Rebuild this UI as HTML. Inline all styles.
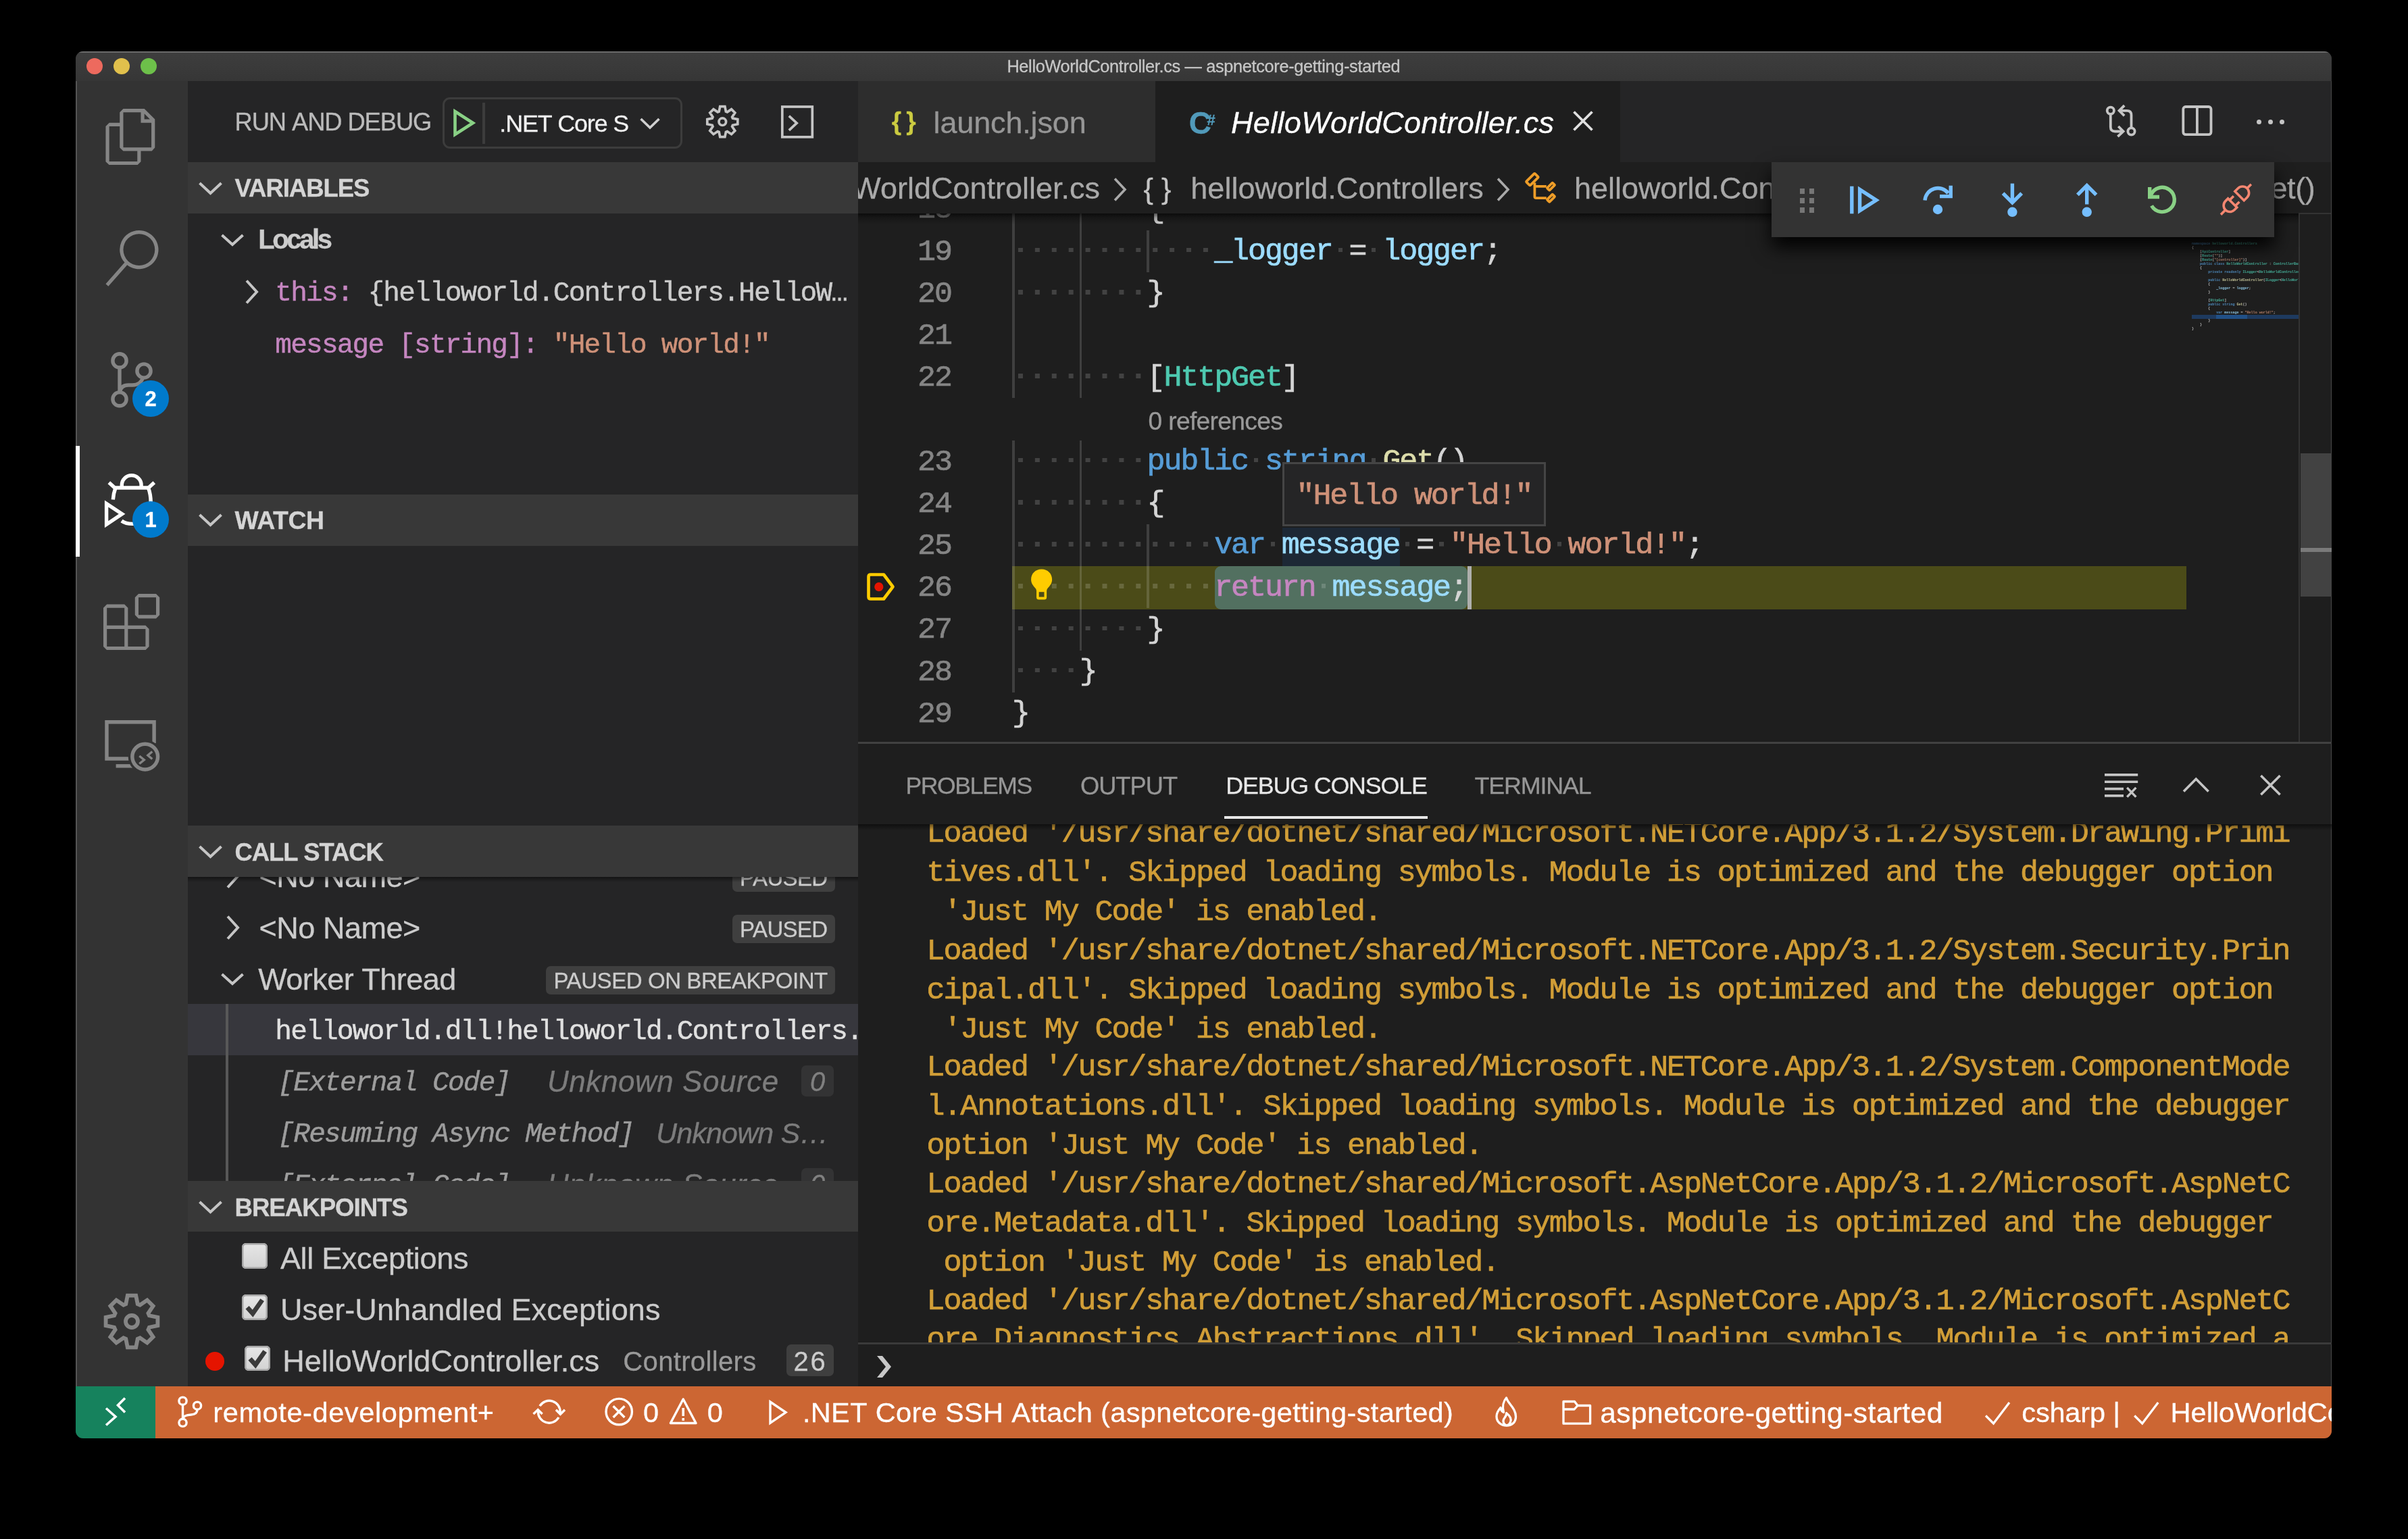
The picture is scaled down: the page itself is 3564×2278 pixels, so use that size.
<!DOCTYPE html>
<html><head><meta charset="utf-8"><title>VS Code</title>
<style>
html,body{margin:0;padding:0;background:#000;}
body{width:3564px;height:2278px;overflow:hidden;position:relative;}
#win{position:absolute;left:112px;top:76px;width:3339px;height:2053px;overflow:hidden;border-radius:11px;background:#1e1e1e;}
#in{position:absolute;left:-112px;top:-76px;width:3564px;height:2278px;will-change:transform;-webkit-font-smoothing:antialiased;}
#in div,#in svg{position:absolute;}
.t{white-space:pre;-webkit-text-stroke:0.3px;}
.clip{overflow:hidden;}
.clip div,.clip svg{position:absolute;}
</style></head><body>
<div id="win"><div id="in">
<div style="left:112.0px;top:76.0px;width:3339.0px;height:44.0px;background:linear-gradient(#3e3e3e,#363636);"></div>
<div style="left:112.0px;top:76.0px;width:3339.0px;height:2.0px;background:#6a6a6a;"></div>
<div style="left:112.0px;top:120.0px;width:166.0px;height:1932.0px;background:#333333;"></div>
<div style="left:278.0px;top:120.0px;width:992.0px;height:1932.0px;background:#252526;"></div>
<div style="left:1270.0px;top:120.0px;width:2181.0px;height:120.0px;background:#252526;"></div>
<div style="left:1270.0px;top:120.0px;width:440.0px;height:120.0px;background:#2d2d2d;"></div>
<div style="left:1710.0px;top:120.0px;width:688.0px;height:120.0px;background:#1e1e1e;"></div>
<div style="left:1270.0px;top:240.0px;width:2181.0px;height:1812.0px;background:#1e1e1e;"></div>
<div style="left:127.8px;top:85.8px;width:24.4px;height:24.4px;background:#ed6a5e;border-radius:50%;"></div>
<div style="left:167.8px;top:85.8px;width:24.4px;height:24.4px;background:#e1c04c;border-radius:50%;"></div>
<div style="left:207.8px;top:85.8px;width:24.4px;height:24.4px;background:#6dc04a;border-radius:50%;"></div>
<div class="t" style="left:1490.40px;top:81.29px;font:400 25.29px/35px 'Liberation Sans',sans-serif;color:#c6c6c6;letter-spacing:-0.314px;">HelloWorldController.cs&nbsp;—&nbsp;aspnetcore-getting-started</div>
<svg style="left:153.4px;top:160.7px;" width="83.2" height="83.2" viewBox="0 0 24 24"><path fill="#858585"  d="M17.5 0h-9L7 1.5V6H2.5L1 7.5v15.07L2.5 24h12.07L16 22.57V18h4.7l1.3-1.43V4.5L17.5 0zm0 2.12l2.38 2.38H17.5V2.12zm-3 20.38h-12v-15H7v9.07L8.5 18h6v4.5zm6-6h-12v-15H16V6h4.5v10.5z"/></svg>
<svg style="left:153.4px;top:340.5px;" width="83.2" height="83.2" viewBox="0 0 24 24"><path fill="#858585"  d="M15.25 0a8.25 8.25 0 0 0-6.18 13.72L1 22.88l1.12 1 8.05-9.12A8.251 8.251 0 1 0 15.25.01V0zm0 15a6.75 6.75 0 1 1 0-13.5 6.75 6.75 0 0 1 0 13.5z"/></svg>
<svg style="left:150.0px;top:515.0px;" width="90.0" height="95.0" viewBox="150 515 90 95"><g fill="none" stroke="#858585" stroke-width="5.4"><circle cx="177" cy="533.9" r="10.1"/><circle cx="177" cy="590.7" r="10.1"/><circle cx="213" cy="549" r="10.1"/><path d="M177 544 V580.6"/><path d="M211.5 559 Q208 570 196 570 H190 Q179 570 177.5 580"/></g></svg>
<svg style="left:153.4px;top:878.7px;" width="83.2" height="83.2" viewBox="0 0 24 24"><path fill="#858585" fill-rule="evenodd" clip-rule="evenodd" d="M13.5 1.5L15 0h7.5L24 1.5V9l-1.5 1.5H15L13.5 9V1.5zm1.5 0V9h7.5V1.5H15zM0 15V6l1.5-1.5H9L10.5 6v7.5H18l1.5 1.5v7.5L18 24H1.5L0 22.5V15zm9-1.5V6H1.5v7.5H9zM9 15H1.5v7.5H9V15zm1.5 7.5H18V15h-7.5v7.5z"/></svg>
<svg style="left:150.0px;top:1060.0px;" width="95.0" height="90.0" viewBox="150 1060 95 90"><g fill="none" stroke="#858585" stroke-width="5.4"><path d="M228.1 1100 V1068.8 H158 V1123 H192"/><path d="M171.6 1133.8 H196"/><circle cx="214.7" cy="1120.1" r="25" fill="#333333" stroke="none"/><circle cx="214.7" cy="1120.1" r="18.9"/><path d="M206.3 1119 L213.3 1124.7 L206.3 1130.5" stroke-width="3.4"/><path d="M225.3 1112.5 L218.8 1118 L225.3 1123.5" stroke-width="3.4"/></g></svg>
<svg style="left:148.0px;top:692.0px;" width="95.0" height="100.0" viewBox="148 692 95 100"><g fill="none" stroke="#ffffff" stroke-width="5.4"><path d="M180.3 722 V718 A14.4 14.4 0 0 1 209.1 718 V722"/><path d="M171 722 H219.5"/><path d="M161.3 714.3 L171.5 723.6 M228.3 714.3 L218.1 723.6"/><path d="M219.5 722 Q223.2 732 223.2 744 V754 Q223.2 775.4 196 775.4 Q186 775.4 180 771"/><path d="M171 722 Q168 730 167.3 739.5"/><path d="M157.6 745.5 L180.6 760.8 L157.6 776.2 Z" stroke-linejoin="miter"/></g></svg>
<div style="left:196.0px;top:562.9px;width:54.2px;height:54.2px;background:#007acc;border-radius:50%;"></div>
<div class="t" style="left:214.47px;top:569.16px;font:700 31.00px/43px 'Liberation Sans',sans-serif;color:#ffffff;">2</div>
<div style="left:196.0px;top:742.2px;width:54.2px;height:54.2px;background:#007acc;border-radius:50%;"></div>
<div class="t" style="left:214.47px;top:748.46px;font:700 31.00px/43px 'Liberation Sans',sans-serif;color:#ffffff;">1</div>
<svg style="left:144.9px;top:1906.4px;" width="100.0" height="100.0" viewBox="144.9 1906.4 100.0 100.0"><g fill="none" stroke="#858585" stroke-width="5.8"><path d="M186.2 1930.5 L188.7 1918.0 L201.1 1918.0 L203.6 1930.5 L207.1 1932.0 L217.7 1924.8 L226.5 1933.6 L219.3 1944.2 L220.8 1947.7 L233.3 1950.2 L233.3 1962.6 L220.8 1965.1 L219.3 1968.6 L226.5 1979.2 L217.7 1988.0 L207.1 1980.8 L203.6 1982.3 L201.1 1994.8 L188.7 1994.8 L186.2 1982.3 L182.7 1980.8 L172.1 1988.0 L163.3 1979.2 L170.5 1968.6 L169.0 1965.1 L156.5 1962.6 L156.5 1950.2 L169.0 1947.7 L170.5 1944.2 L163.3 1933.6 L172.1 1924.8 L182.7 1932.0 Z" stroke-linejoin="miter"/><circle cx="194.9" cy="1956.4" r="9.0"/></g></svg>
<div style="left:112.0px;top:120.0px;width:2.2px;height:1932.0px;background:#555555;"></div>
<div style="left:112.0px;top:659.6px;width:5.5px;height:164.4px;background:#ffffff;"></div>
<div class="t" style="left:347.50px;top:155.42px;font:400 36.35px/51px 'Liberation Sans',sans-serif;color:#bbbbbb;letter-spacing:-1.079px;">RUN&nbsp;AND&nbsp;DEBUG</div>
<div style="left:654.6px;top:144.0px;width:355.4px;height:76.0px;background:#252526;box-sizing:border-box;border:3.5px solid #3c3c3c;border-radius:11px;"></div>
<svg style="left:669.0px;top:160.0px;" width="36.0" height="44.0" viewBox="0 0 36 44"><path d="M4.5 5 L31 22 L4.5 39 Z" fill="none" stroke="#89d185" stroke-width="4.6" stroke-linejoin="miter"/></svg>
<div style="left:713.5px;top:152.0px;width:4.0px;height:61.0px;background:#3c3c3c;"></div>
<div class="t" style="left:739.30px;top:157.81px;font:400 35.87px/50px 'Liberation Sans',sans-serif;color:#f0f0f0;letter-spacing:-1.130px;">.NET&nbsp;Core&nbsp;S</div>
<svg style="left:946.5px;top:171.5px;" width="30.0" height="22.0" viewBox="0 0 30 22"><polyline points="1.5,4 15.0,17 28.5,4" fill="none" stroke="#d0d0d0" stroke-width="3.6" stroke-linejoin="miter"/></svg>
<div style="left:278.0px;top:240.0px;width:992.0px;height:76.3px;background:#383838;"></div>
<svg style="left:293.5px;top:266.5px;" width="35.0" height="24.0" viewBox="0 0 35 24"><polyline points="1.5,4 17.5,19 33.5,4" fill="none" stroke="#c5c5c5" stroke-width="4" stroke-linejoin="miter"/></svg>
<div class="t" style="left:347.50px;top:253.22px;font:700 36.52px/51px 'Liberation Sans',sans-serif;color:#d4d4d4;letter-spacing:-1.044px;">VARIABLES</div>
<svg style="left:326.5px;top:344.0px;" width="34.0" height="23.0" viewBox="0 0 34 23"><polyline points="1.5,4 17.0,18 32.5,4" fill="none" stroke="#c5c5c5" stroke-width="4" stroke-linejoin="miter"/></svg>
<div class="t" style="left:382.20px;top:326.26px;font:700 39.90px/56px 'Liberation Sans',sans-serif;color:#cccccc;letter-spacing:-3.310px;">Locals</div>
<svg style="left:360.5px;top:414.0px;" width="24.0" height="36.0" viewBox="0 0 24 36"><polyline points="4,1.5 19,18.0 4,34.5" fill="none" stroke="#c5c5c5" stroke-width="4" stroke-linejoin="miter"/></svg>
<div class="t" style="left:407.30px;top:406.08px;font:400 41.00px/57px 'Liberation Mono',monospace;color:#c586c0;letter-spacing:-1.744px;-webkit-text-stroke:0.45px;">this:</div>
<div class="t" style="left:544.46px;top:406.08px;font:400 41.00px/57px 'Liberation Mono',monospace;color:#cccccc;letter-spacing:-1.744px;-webkit-text-stroke:0.45px;">{helloworld.Controllers.HelloW…</div>
<div class="t" style="left:407.30px;top:483.08px;font:400 41.00px/57px 'Liberation Mono',monospace;color:#c586c0;letter-spacing:-1.744px;-webkit-text-stroke:0.45px;">message&nbsp;[string]:</div>
<div class="t" style="left:818.78px;top:483.08px;font:400 41.00px/57px 'Liberation Mono',monospace;color:#ce9178;letter-spacing:-1.744px;-webkit-text-stroke:0.45px;">"Hello&nbsp;world!"</div>
<div style="left:278.0px;top:731.6px;width:992.0px;height:76.4px;background:#383838;"></div>
<svg style="left:293.5px;top:758.0px;" width="35.0" height="24.0" viewBox="0 0 35 24"><polyline points="1.5,4 17.5,19 33.5,4" fill="none" stroke="#c5c5c5" stroke-width="4" stroke-linejoin="miter"/></svg>
<div class="t" style="left:347.50px;top:744.43px;font:700 37.37px/52px 'Liberation Sans',sans-serif;color:#d4d4d4;letter-spacing:-0.438px;">WATCH</div>
<div class="clip" style="left:278.0px;top:1298.0px;width:992.0px;height:450.0px;"><div style="left:-278.0px;top:-1298.0px;width:3564px;height:2278px;">
<svg style="left:333.0px;top:1278.7px;" width="24.0" height="36.0" viewBox="0 0 24 36"><polyline points="4,1.5 19,18.0 4,34.5" fill="none" stroke="#c5c5c5" stroke-width="4" stroke-linejoin="miter"/></svg>
<div class="t" style="left:383.50px;top:1265.72px;font:400 45.00px/63px 'Liberation Sans',sans-serif;color:#cccccc;letter-spacing:-0.481px;">&lt;No&nbsp;Name&gt;</div>
<div style="left:1084.1px;top:1278.0px;width:151.7px;height:41.5px;background:#3f3f3f;border-radius:7px;"></div>
<div class="t" style="left:1095.10px;top:1276.63px;font:400 33.00px/46px 'Liberation Sans',sans-serif;color:#cccccc;letter-spacing:-0.630px;">PAUSED</div>
<svg style="left:333.0px;top:1354.7px;" width="24.0" height="36.0" viewBox="0 0 24 36"><polyline points="4,1.5 19,18.0 4,34.5" fill="none" stroke="#c5c5c5" stroke-width="4" stroke-linejoin="miter"/></svg>
<div class="t" style="left:383.50px;top:1341.72px;font:400 45.00px/63px 'Liberation Sans',sans-serif;color:#cccccc;letter-spacing:-0.481px;">&lt;No&nbsp;Name&gt;</div>
<div style="left:1084.1px;top:1354.0px;width:151.7px;height:41.5px;background:#3f3f3f;border-radius:7px;"></div>
<div class="t" style="left:1095.10px;top:1352.63px;font:400 33.00px/46px 'Liberation Sans',sans-serif;color:#cccccc;letter-spacing:-0.630px;">PAUSED</div>
<svg style="left:326.5px;top:1438.0px;" width="34.0" height="23.0" viewBox="0 0 34 23"><polyline points="1.5,4 17.0,18 32.5,4" fill="none" stroke="#c5c5c5" stroke-width="4" stroke-linejoin="miter"/></svg>
<div class="t" style="left:382.20px;top:1417.92px;font:400 45.00px/63px 'Liberation Sans',sans-serif;color:#cccccc;letter-spacing:-0.517px;">Worker&nbsp;Thread</div>
<div style="left:807.9px;top:1430.3px;width:427.9px;height:41.5px;background:#3f3f3f;border-radius:7px;"></div>
<div class="t" style="left:819.40px;top:1428.93px;font:400 33.00px/46px 'Liberation Sans',sans-serif;color:#cccccc;letter-spacing:-0.418px;">PAUSED&nbsp;ON&nbsp;BREAKPOINT</div>
<div style="left:278.0px;top:1486.0px;width:992.0px;height:75.5px;background:#37373d;"></div>
<div style="left:334.4px;top:1486.0px;width:3.4px;height:270.0px;background:#585858;"></div>
<div class="t" style="left:407.30px;top:1498.58px;font:400 41.00px/57px 'Liberation Mono',monospace;color:#e0e0e0;letter-spacing:-1.744px;-webkit-text-stroke:0.45px;">helloworld.dll!helloworld.Controllers.HelloWorldController.Get()</div>
<div class="t" style="left:411.50px;top:1574.78px;font:italic 400 41.00px/57px 'Liberation Mono',monospace;color:#9d9d9d;letter-spacing:-1.744px;-webkit-text-stroke:0.45px;">[External&nbsp;Code]</div>
<div class="t" style="left:810.00px;top:1570.21px;font:italic 400 43.97px/62px 'Liberation Sans',sans-serif;color:#7c7c7c;letter-spacing:0.562px;">Unknown&nbsp;Source</div>
<div style="left:1186.2px;top:1576.7px;width:47.8px;height:46.6px;background:#333334;border-radius:7px;"></div>
<div class="t" style="left:1199.00px;top:1573.16px;font:italic 400 40.00px/56px 'Liberation Sans',sans-serif;color:#808080;">0</div>
<div class="t" style="left:411.50px;top:1727.08px;font:italic 400 41.00px/57px 'Liberation Mono',monospace;color:#9d9d9d;letter-spacing:-1.744px;-webkit-text-stroke:0.45px;">[External&nbsp;Code]</div>
<div class="t" style="left:810.00px;top:1722.51px;font:italic 400 43.97px/62px 'Liberation Sans',sans-serif;color:#7c7c7c;letter-spacing:0.562px;">Unknown&nbsp;Source</div>
<div style="left:1186.2px;top:1729.0px;width:47.8px;height:46.6px;background:#333334;border-radius:7px;"></div>
<div class="t" style="left:1199.00px;top:1725.46px;font:italic 400 40.00px/56px 'Liberation Sans',sans-serif;color:#808080;">0</div>
<div class="t" style="left:411.50px;top:1651.08px;font:italic 400 41.00px/57px 'Liberation Mono',monospace;color:#9d9d9d;letter-spacing:-1.744px;-webkit-text-stroke:0.45px;">[Resuming&nbsp;Async&nbsp;Method]</div>
<div class="t" style="left:971.00px;top:1647.49px;font:italic 400 43.00px/60px 'Liberation Sans',sans-serif;color:#7c7c7c;letter-spacing:-0.833px;">Unknown&nbsp;S…</div>
</div></div>
<div style="left:278.0px;top:1298.0px;width:992.0px;height:8.0px;background:linear-gradient(rgba(0,0,0,.45),rgba(0,0,0,0));"></div>
<div style="left:278.0px;top:1221.9px;width:992.0px;height:76.2px;background:#383838;"></div>
<svg style="left:293.5px;top:1248.5px;" width="35.0" height="24.0" viewBox="0 0 35 24"><polyline points="1.5,4 17.5,19 33.5,4" fill="none" stroke="#c5c5c5" stroke-width="4" stroke-linejoin="miter"/></svg>
<div class="t" style="left:347.50px;top:1235.72px;font:700 36.46px/51px 'Liberation Sans',sans-serif;color:#d4d4d4;letter-spacing:-1.094px;">CALL&nbsp;STACK</div>
<div style="left:278.0px;top:1747.6px;width:992.0px;height:75.8px;background:#383838;"></div>
<svg style="left:293.5px;top:1774.5px;" width="35.0" height="24.0" viewBox="0 0 35 24"><polyline points="1.5,4 17.5,19 33.5,4" fill="none" stroke="#c5c5c5" stroke-width="4" stroke-linejoin="miter"/></svg>
<div class="t" style="left:347.50px;top:1761.72px;font:700 36.67px/51px 'Liberation Sans',sans-serif;color:#d4d4d4;letter-spacing:-1.040px;">BREAKPOINTS</div>
<div style="left:358.1px;top:1840.4px;width:38.2px;height:37.4px;background:linear-gradient(#e6e6e6,#d2d2d2);border-radius:6px;box-shadow:inset 0 0 0 2.4px #a6a6a6;"></div>
<div class="t" style="left:414.90px;top:1831.42px;font:400 45.00px/63px 'Liberation Sans',sans-serif;color:#cccccc;letter-spacing:-0.312px;">All&nbsp;Exceptions</div>
<div style="left:358.1px;top:1916.2px;width:38.2px;height:37.4px;background:linear-gradient(#e6e6e6,#d2d2d2);border-radius:6px;box-shadow:inset 0 0 0 2.4px #a6a6a6;"></div>
<svg style="left:358.1px;top:1916.2px;" width="38.2" height="37.4" viewBox="0 0 38 37"><path d="M8 19 L16 28 L30 8" fill="none" stroke="#3a3a3a" stroke-width="6.8"/></svg>
<div class="t" style="left:414.90px;top:1907.42px;font:400 45.00px/63px 'Liberation Sans',sans-serif;color:#cccccc;letter-spacing:0.094px;">User-Unhandled&nbsp;Exceptions</div>
<div style="left:303.9px;top:2000.5px;width:28.0px;height:28.0px;background:#e51400;border-radius:50%;"></div>
<div style="left:361.9px;top:1992.0px;width:38.2px;height:37.4px;background:linear-gradient(#e6e6e6,#d2d2d2);border-radius:6px;box-shadow:inset 0 0 0 2.4px #a6a6a6;"></div>
<svg style="left:361.9px;top:1992.0px;" width="38.2" height="37.4" viewBox="0 0 38 37"><path d="M8 19 L16 28 L30 8" fill="none" stroke="#3a3a3a" stroke-width="6.8"/></svg>
<div class="t" style="left:418.30px;top:1983.32px;font:400 45.00px/63px 'Liberation Sans',sans-serif;color:#cccccc;letter-spacing:-0.016px;">HelloWorldController.cs</div>
<div class="t" style="left:922.30px;top:1987.46px;font:400 40.00px/56px 'Liberation Sans',sans-serif;color:#9a9a9a;letter-spacing:0.350px;">Controllers</div>
<div style="left:1163.8px;top:1990.0px;width:70.3px;height:47.4px;background:#3f3f3f;border-radius:7px;"></div>
<div class="t" style="left:1174.40px;top:1986.96px;font:400 40.00px/56px 'Liberation Sans',sans-serif;color:#cccccc;letter-spacing:2.900px;">26</div>
<svg style="left:1040.3px;top:150.8px;" width="58.5" height="58.5" viewBox="1040.3 150.8 58.5 58.5"><g fill="none" stroke="#c5c5c5" stroke-width="3.7"><path d="M1064.5 164.9 L1066.0 157.5 L1073.2 157.5 L1074.7 164.9 L1076.7 165.7 L1082.9 161.5 L1088.1 166.7 L1083.9 172.9 L1084.7 174.9 L1092.1 176.4 L1092.1 183.6 L1084.7 185.1 L1083.9 187.1 L1088.1 193.3 L1082.9 198.5 L1076.7 194.3 L1074.7 195.1 L1073.2 202.5 L1066.0 202.5 L1064.5 195.1 L1062.5 194.3 L1056.3 198.5 L1051.1 193.3 L1055.3 187.1 L1054.5 185.1 L1047.1 183.6 L1047.1 176.4 L1054.5 174.9 L1055.3 172.9 L1051.1 166.7 L1056.3 161.5 L1062.5 165.7 Z" stroke-linejoin="miter"/><circle cx="1069.6" cy="180" r="5.3"/></g></svg>
<svg style="left:1150.0px;top:150.0px;" width="60.0" height="60.0" viewBox="1150 150 60 60"><g fill="none" stroke="#c5c5c5" stroke-width="3.7"><rect x="1157.8" y="158" width="44.5" height="44.8"/><path d="M1167.8 171.6 L1179.2 182.2 L1167.8 192.9"/></g></svg>
<div class="clip" style="left:1270.0px;top:316.0px;width:2181.0px;height:783.0px;"><div style="left:-1270.0px;top:-316.0px;width:3564px;height:2278px;">
<div style="left:1498.0px;top:838.1px;width:1738.0px;height:63.5px;background:#4b4b18;"></div>
<div style="left:1897.9px;top:780.5px;width:173.8px;height:57.2px;background:#1d2835;"></div>
<div style="left:1798.2px;top:838.1px;width:373.5px;height:63.5px;background:#527060;border-radius:9px;"></div>
<div style="left:2172.0px;top:838.1px;width:5.5px;height:63.5px;background:#aeafad;"></div>
<div style="left:1498.0px;top:278.4px;width:3.8px;height:62.2px;background:rgba(255,255,255,.15);"></div>
<div style="left:1597.7px;top:278.4px;width:3.8px;height:62.2px;background:rgba(255,255,255,.15);"></div>
<div style="left:1498.0px;top:340.6px;width:3.8px;height:62.2px;background:rgba(255,255,255,.15);"></div>
<div style="left:1597.7px;top:340.6px;width:3.8px;height:62.2px;background:rgba(255,255,255,.15);"></div>
<div style="left:1697.4px;top:340.6px;width:3.8px;height:62.2px;background:rgba(255,255,255,.15);"></div>
<div style="left:1498.0px;top:402.8px;width:3.8px;height:62.2px;background:rgba(255,255,255,.15);"></div>
<div style="left:1597.7px;top:402.8px;width:3.8px;height:62.2px;background:rgba(255,255,255,.15);"></div>
<div style="left:1498.0px;top:465.0px;width:3.8px;height:62.2px;background:rgba(255,255,255,.15);"></div>
<div style="left:1597.7px;top:465.0px;width:3.8px;height:62.2px;background:rgba(255,255,255,.15);"></div>
<div style="left:1498.0px;top:527.2px;width:3.8px;height:62.2px;background:rgba(255,255,255,.15);"></div>
<div style="left:1597.7px;top:527.2px;width:3.8px;height:62.2px;background:rgba(255,255,255,.15);"></div>
<div style="left:1498.0px;top:651.6px;width:3.8px;height:62.2px;background:rgba(255,255,255,.15);"></div>
<div style="left:1597.7px;top:651.6px;width:3.8px;height:62.2px;background:rgba(255,255,255,.15);"></div>
<div style="left:1498.0px;top:713.8px;width:3.8px;height:62.2px;background:rgba(255,255,255,.15);"></div>
<div style="left:1597.7px;top:713.8px;width:3.8px;height:62.2px;background:rgba(255,255,255,.15);"></div>
<div style="left:1498.0px;top:776.0px;width:3.8px;height:62.2px;background:rgba(255,255,255,.15);"></div>
<div style="left:1597.7px;top:776.0px;width:3.8px;height:62.2px;background:rgba(255,255,255,.15);"></div>
<div style="left:1697.4px;top:776.0px;width:3.8px;height:62.2px;background:rgba(255,255,255,.15);"></div>
<div style="left:1498.0px;top:838.2px;width:3.8px;height:62.2px;background:rgba(255,255,255,.15);"></div>
<div style="left:1597.7px;top:838.2px;width:3.8px;height:62.2px;background:rgba(255,255,255,.15);"></div>
<div style="left:1697.4px;top:838.2px;width:3.8px;height:62.2px;background:rgba(255,255,255,.15);"></div>
<div style="left:1498.0px;top:900.4px;width:3.8px;height:62.2px;background:rgba(255,255,255,.15);"></div>
<div style="left:1597.7px;top:900.4px;width:3.8px;height:62.2px;background:rgba(255,255,255,.15);"></div>
<div style="left:1498.0px;top:962.6px;width:3.8px;height:62.2px;background:rgba(255,255,255,.15);"></div>
<div style="left:1498.1px;top:304.6px;width:199.4px;height:6.6px;background:linear-gradient(90deg,transparent 9.3px,rgba(255,255,255,.16) 9.3px,rgba(255,255,255,.16) 15.5px,transparent 15.5px);background-size:24.92px 6.6px;"></div>
<div class="t" style="left:1498.1px;top:279.83px;font:400 45.0px/62px 'Liberation Mono',monospace;letter-spacing:-2.084px;-webkit-text-stroke:0.7px;">&nbsp;&nbsp;&nbsp;&nbsp;&nbsp;&nbsp;&nbsp;&nbsp;<span style="color:#d4d4d4">{</span></div>
<div style="left:1498.1px;top:366.8px;width:299.0px;height:6.6px;background:linear-gradient(90deg,transparent 9.3px,rgba(255,255,255,.16) 9.3px,rgba(255,255,255,.16) 15.5px,transparent 15.5px);background-size:24.92px 6.6px;"></div>
<div style="left:1971.6px;top:366.8px;width:24.9px;height:6.6px;background:linear-gradient(90deg,transparent 9.3px,rgba(255,255,255,.16) 9.3px,rgba(255,255,255,.16) 15.5px,transparent 15.5px);background-size:24.92px 6.6px;"></div>
<div style="left:2021.4px;top:366.8px;width:24.9px;height:6.6px;background:linear-gradient(90deg,transparent 9.3px,rgba(255,255,255,.16) 9.3px,rgba(255,255,255,.16) 15.5px,transparent 15.5px);background-size:24.92px 6.6px;"></div>
<div class="t" style="left:1498.1px;top:342.03px;font:400 45.0px/62px 'Liberation Mono',monospace;letter-spacing:-2.084px;-webkit-text-stroke:0.7px;">&nbsp;&nbsp;&nbsp;&nbsp;&nbsp;&nbsp;&nbsp;&nbsp;&nbsp;&nbsp;&nbsp;&nbsp;<span style="color:#9cdcfe">_logger</span>&nbsp;<span style="color:#d4d4d4">=</span>&nbsp;<span style="color:#9cdcfe">logger</span><span style="color:#d4d4d4">;</span></div>
<div style="left:1498.1px;top:429.0px;width:199.4px;height:6.6px;background:linear-gradient(90deg,transparent 9.3px,rgba(255,255,255,.16) 9.3px,rgba(255,255,255,.16) 15.5px,transparent 15.5px);background-size:24.92px 6.6px;"></div>
<div class="t" style="left:1498.1px;top:404.23px;font:400 45.0px/62px 'Liberation Mono',monospace;letter-spacing:-2.084px;-webkit-text-stroke:0.7px;">&nbsp;&nbsp;&nbsp;&nbsp;&nbsp;&nbsp;&nbsp;&nbsp;<span style="color:#d4d4d4">}</span></div>
<div style="left:1498.1px;top:553.4px;width:199.4px;height:6.6px;background:linear-gradient(90deg,transparent 9.3px,rgba(255,255,255,.16) 9.3px,rgba(255,255,255,.16) 15.5px,transparent 15.5px);background-size:24.92px 6.6px;"></div>
<div class="t" style="left:1498.1px;top:528.64px;font:400 45.0px/62px 'Liberation Mono',monospace;letter-spacing:-2.084px;-webkit-text-stroke:0.7px;">&nbsp;&nbsp;&nbsp;&nbsp;&nbsp;&nbsp;&nbsp;&nbsp;<span style="color:#d4d4d4">[</span><span style="color:#4ec9b0">HttpGet</span><span style="color:#d4d4d4">]</span></div>
<div style="left:1498.1px;top:677.8px;width:199.4px;height:6.6px;background:linear-gradient(90deg,transparent 9.3px,rgba(255,255,255,.16) 9.3px,rgba(255,255,255,.16) 15.5px,transparent 15.5px);background-size:24.92px 6.6px;"></div>
<div style="left:1847.0px;top:677.8px;width:24.9px;height:6.6px;background:linear-gradient(90deg,transparent 9.3px,rgba(255,255,255,.16) 9.3px,rgba(255,255,255,.16) 15.5px,transparent 15.5px);background-size:24.92px 6.6px;"></div>
<div style="left:2021.4px;top:677.8px;width:24.9px;height:6.6px;background:linear-gradient(90deg,transparent 9.3px,rgba(255,255,255,.16) 9.3px,rgba(255,255,255,.16) 15.5px,transparent 15.5px);background-size:24.92px 6.6px;"></div>
<div class="t" style="left:1498.1px;top:653.04px;font:400 45.0px/62px 'Liberation Mono',monospace;letter-spacing:-2.084px;-webkit-text-stroke:0.7px;">&nbsp;&nbsp;&nbsp;&nbsp;&nbsp;&nbsp;&nbsp;&nbsp;<span style="color:#569cd6">public</span>&nbsp;<span style="color:#569cd6">string</span>&nbsp;<span style="color:#dcdcaa">Get</span><span style="color:#d4d4d4">()</span></div>
<div style="left:1498.1px;top:740.0px;width:199.4px;height:6.6px;background:linear-gradient(90deg,transparent 9.3px,rgba(255,255,255,.16) 9.3px,rgba(255,255,255,.16) 15.5px,transparent 15.5px);background-size:24.92px 6.6px;"></div>
<div class="t" style="left:1498.1px;top:715.24px;font:400 45.0px/62px 'Liberation Mono',monospace;letter-spacing:-2.084px;-webkit-text-stroke:0.7px;">&nbsp;&nbsp;&nbsp;&nbsp;&nbsp;&nbsp;&nbsp;&nbsp;<span style="color:#d4d4d4">{</span></div>
<div style="left:1498.1px;top:802.2px;width:299.0px;height:6.6px;background:linear-gradient(90deg,transparent 9.3px,rgba(255,255,255,.16) 9.3px,rgba(255,255,255,.16) 15.5px,transparent 15.5px);background-size:24.92px 6.6px;"></div>
<div style="left:1871.9px;top:802.2px;width:24.9px;height:6.6px;background:linear-gradient(90deg,transparent 9.3px,rgba(255,255,255,.16) 9.3px,rgba(255,255,255,.16) 15.5px,transparent 15.5px);background-size:24.92px 6.6px;"></div>
<div style="left:2071.3px;top:802.2px;width:24.9px;height:6.6px;background:linear-gradient(90deg,transparent 9.3px,rgba(255,255,255,.16) 9.3px,rgba(255,255,255,.16) 15.5px,transparent 15.5px);background-size:24.92px 6.6px;"></div>
<div style="left:2121.1px;top:802.2px;width:24.9px;height:6.6px;background:linear-gradient(90deg,transparent 9.3px,rgba(255,255,255,.16) 9.3px,rgba(255,255,255,.16) 15.5px,transparent 15.5px);background-size:24.92px 6.6px;"></div>
<div style="left:2295.5px;top:802.2px;width:24.9px;height:6.6px;background:linear-gradient(90deg,transparent 9.3px,rgba(255,255,255,.16) 9.3px,rgba(255,255,255,.16) 15.5px,transparent 15.5px);background-size:24.92px 6.6px;"></div>
<div class="t" style="left:1498.1px;top:777.44px;font:400 45.0px/62px 'Liberation Mono',monospace;letter-spacing:-2.084px;-webkit-text-stroke:0.7px;">&nbsp;&nbsp;&nbsp;&nbsp;&nbsp;&nbsp;&nbsp;&nbsp;&nbsp;&nbsp;&nbsp;&nbsp;<span style="color:#569cd6">var</span>&nbsp;<span style="color:#9cdcfe">message</span>&nbsp;<span style="color:#d4d4d4">=</span>&nbsp;<span style="color:#ce9178">"Hello</span>&nbsp;<span style="color:#ce9178">world!"</span><span style="color:#d4d4d4">;</span></div>
<div style="left:1498.1px;top:864.4px;width:299.0px;height:6.6px;background:linear-gradient(90deg,transparent 9.3px,rgba(255,255,255,.16) 9.3px,rgba(255,255,255,.16) 15.5px,transparent 15.5px);background-size:24.92px 6.6px;"></div>
<div style="left:1946.7px;top:864.4px;width:24.9px;height:6.6px;background:linear-gradient(90deg,transparent 9.3px,rgba(255,255,255,.16) 9.3px,rgba(255,255,255,.16) 15.5px,transparent 15.5px);background-size:24.92px 6.6px;"></div>
<div class="t" style="left:1498.1px;top:839.64px;font:400 45.0px/62px 'Liberation Mono',monospace;letter-spacing:-2.084px;-webkit-text-stroke:0.7px;">&nbsp;&nbsp;&nbsp;&nbsp;&nbsp;&nbsp;&nbsp;&nbsp;&nbsp;&nbsp;&nbsp;&nbsp;<span style="color:#c586c0">return</span>&nbsp;<span style="color:#9cdcfe">message</span><span style="color:#d4d4d4">;</span></div>
<div style="left:1498.1px;top:926.6px;width:199.4px;height:6.6px;background:linear-gradient(90deg,transparent 9.3px,rgba(255,255,255,.16) 9.3px,rgba(255,255,255,.16) 15.5px,transparent 15.5px);background-size:24.92px 6.6px;"></div>
<div class="t" style="left:1498.1px;top:901.84px;font:400 45.0px/62px 'Liberation Mono',monospace;letter-spacing:-2.084px;-webkit-text-stroke:0.7px;">&nbsp;&nbsp;&nbsp;&nbsp;&nbsp;&nbsp;&nbsp;&nbsp;<span style="color:#d4d4d4">}</span></div>
<div style="left:1498.1px;top:988.8px;width:99.7px;height:6.6px;background:linear-gradient(90deg,transparent 9.3px,rgba(255,255,255,.16) 9.3px,rgba(255,255,255,.16) 15.5px,transparent 15.5px);background-size:24.92px 6.6px;"></div>
<div class="t" style="left:1498.1px;top:964.04px;font:400 45.0px/62px 'Liberation Mono',monospace;letter-spacing:-2.084px;-webkit-text-stroke:0.7px;">&nbsp;&nbsp;&nbsp;&nbsp;<span style="color:#d4d4d4">}</span></div>
<div class="t" style="left:1498.1px;top:1026.24px;font:400 45.0px/62px 'Liberation Mono',monospace;letter-spacing:-2.084px;-webkit-text-stroke:0.7px;"><span style="color:#d4d4d4">}</span></div>
<div class="t" style="left:1358.00px;top:279.33px;font:400 45.00px/63px 'Liberation Mono',monospace;color:#858585;letter-spacing:-2.084px;-webkit-text-stroke:0.7px;">18</div>
<div class="t" style="left:1358.00px;top:341.53px;font:400 45.00px/63px 'Liberation Mono',monospace;color:#858585;letter-spacing:-2.084px;-webkit-text-stroke:0.7px;">19</div>
<div class="t" style="left:1358.00px;top:403.73px;font:400 45.00px/63px 'Liberation Mono',monospace;color:#858585;letter-spacing:-2.084px;-webkit-text-stroke:0.7px;">20</div>
<div class="t" style="left:1358.00px;top:465.94px;font:400 45.00px/63px 'Liberation Mono',monospace;color:#858585;letter-spacing:-2.084px;-webkit-text-stroke:0.7px;">21</div>
<div class="t" style="left:1358.00px;top:528.14px;font:400 45.00px/63px 'Liberation Mono',monospace;color:#858585;letter-spacing:-2.084px;-webkit-text-stroke:0.7px;">22</div>
<div class="t" style="left:1358.00px;top:652.54px;font:400 45.00px/63px 'Liberation Mono',monospace;color:#858585;letter-spacing:-2.084px;-webkit-text-stroke:0.7px;">23</div>
<div class="t" style="left:1358.00px;top:714.74px;font:400 45.00px/63px 'Liberation Mono',monospace;color:#858585;letter-spacing:-2.084px;-webkit-text-stroke:0.7px;">24</div>
<div class="t" style="left:1358.00px;top:776.94px;font:400 45.00px/63px 'Liberation Mono',monospace;color:#858585;letter-spacing:-2.084px;-webkit-text-stroke:0.7px;">25</div>
<div class="t" style="left:1358.00px;top:839.14px;font:400 45.00px/63px 'Liberation Mono',monospace;color:#858585;letter-spacing:-2.084px;-webkit-text-stroke:0.7px;">26</div>
<div class="t" style="left:1358.00px;top:901.34px;font:400 45.00px/63px 'Liberation Mono',monospace;color:#858585;letter-spacing:-2.084px;-webkit-text-stroke:0.7px;">27</div>
<div class="t" style="left:1358.00px;top:963.54px;font:400 45.00px/63px 'Liberation Mono',monospace;color:#858585;letter-spacing:-2.084px;-webkit-text-stroke:0.7px;">28</div>
<div class="t" style="left:1358.00px;top:1025.74px;font:400 45.00px/63px 'Liberation Mono',monospace;color:#858585;letter-spacing:-2.084px;-webkit-text-stroke:0.7px;">29</div>
<div class="t" style="left:1699.60px;top:597.43px;font:400 37.20px/52px 'Liberation Sans',sans-serif;color:#999999;letter-spacing:-0.682px;">0&nbsp;references</div>
<svg style="left:1523.6px;top:840.6px;" width="35.2" height="48.0" viewBox="0 0 34 47"><path d="M17 1.5 C8 1.5 1.8 8 1.8 16.3 C1.8 22 5 25.3 7.6 28.5 C9 30.3 9.6 31.5 9.6 33.6 L9.6 42 Q9.6 45.5 13 45.5 L21 45.5 Q24.4 45.5 24.4 42 L24.4 33.6 C24.4 31.5 25 30.3 26.4 28.5 C29 25.3 32.2 22 32.2 16.3 C32.2 8 26 1.5 17 1.5 Z" fill="#ffcc00"/><rect x="13.2" y="34.5" width="7.6" height="7.2" fill="#4b4b18"/></svg>
<svg style="left:1281.0px;top:845.5px;" width="45.0" height="45.0" viewBox="0 0 45 45"><path d="M4.5 7.5 Q4.5 4.5 7.5 4.5 L27 4.5 L40.5 22.5 L27 40.5 L7.5 40.5 Q4.5 40.5 4.5 37.5 Z" fill="none" stroke="#ffcc00" stroke-width="4.6" stroke-linejoin="round"/><circle cx="19.8" cy="22.7" r="6.6" fill="#e51400"/></svg>
<div style="left:1898.4px;top:683.6px;width:389.8px;height:95.5px;background:#252526;box-sizing:border-box;border:3.6px solid #454545;"></div>
<div class="t" style="left:1918.50px;top:703.04px;font:400 45.00px/63px 'Liberation Mono',monospace;color:#ce9178;letter-spacing:-2.084px;-webkit-text-stroke:0.7px;">"Hello&nbsp;world!"</div>
</div></div>
<div style="left:3402.2px;top:316.0px;width:1.4px;height:783.0px;background:#333333;"></div>
<div style="left:3402.2px;top:315.4px;width:48.0px;height:1.4px;background:#333333;"></div>
<div style="left:3449.8px;top:120.0px;width:1.6px;height:1932.0px;background:#484848;"></div>
<div style="left:3405.0px;top:670.6px;width:46.0px;height:212.4px;background:#424242;"></div>
<div style="left:3405.0px;top:810.5px;width:46.0px;height:6.0px;background:#7a7a7a;"></div>
<div class="t" style="left:1319.80px;top:153.93px;font:700 36.99px/52px 'Liberation Sans',sans-serif;color:#cbcb41;letter-spacing:-1.550px;">{&nbsp;}</div>
<div class="t" style="left:1381.60px;top:149.82px;font:400 45.00px/63px 'Liberation Sans',sans-serif;color:#969696;letter-spacing:-0.155px;">launch.json</div>
<div class="t" style="left:1759.80px;top:149.53px;font:700 46.00px/64px 'Liberation Sans',sans-serif;color:#519aba;">C</div>
<div class="t" style="left:1786.50px;top:161.75px;font:700 22.00px/31px 'Liberation Sans',sans-serif;color:#519aba;">#</div>
<div class="t" style="left:1822.00px;top:149.82px;font:italic 400 45.00px/63px 'Liberation Sans',sans-serif;color:#ffffff;letter-spacing:0.318px;">HelloWorldController.cs</div>
<svg style="left:2327.0px;top:163.0px;" width="32.0" height="32.0" viewBox="0 0 32 32"><path d="M2.5 2.5 L29.5 29.5 M29.5 2.5 L2.5 29.5" stroke="#e0e0e0" stroke-width="3.8" fill="none"/></svg>
<svg style="left:3110.0px;top:150.0px;" width="60.0" height="60.0" viewBox="3110 150 60 60"><g fill="none" stroke="#c5c5c5" stroke-width="3.8"><circle cx="3123.8" cy="163.8" r="5.1"/><circle cx="3154.5" cy="194.5" r="5.1"/><path d="M3123.8 169 V188 Q3123.8 194.5 3130.3 194.5 H3142"/><path d="M3135.3 187 L3142.6 194.5 L3134.4 202.2"/><path d="M3154.5 189.3 V170.3 Q3154.5 163.8 3148 163.8 H3137.4"/><path d="M3144.2 156.2 L3136.6 163.8 L3144.2 171.4"/></g></svg>
<svg style="left:3225.0px;top:152.0px;" width="56.0" height="56.0" viewBox="3225 152 56 56"><g fill="none" stroke="#c5c5c5" stroke-width="3.8"><rect x="3231.3" y="158" width="41.2" height="41.1" rx="3.5"/><path d="M3251.9 158 V199"/></g></svg>
<div style="left:3339.5px;top:176.7px;width:7.4px;height:7.4px;background:#c5c5c5;border-radius:50%;"></div>
<div style="left:3356.7px;top:176.7px;width:7.4px;height:7.4px;background:#c5c5c5;border-radius:50%;"></div>
<div style="left:3373.9px;top:176.7px;width:7.4px;height:7.4px;background:#c5c5c5;border-radius:50%;"></div>
<div class="clip" style="left:1270.0px;top:240.0px;width:2181.0px;height:76.0px;"><div style="left:-1270.0px;top:-240.0px;width:3564px;height:2278px;">
<div class="t" style="left:1158.80px;top:247.42px;font:400 45.00px/63px 'Liberation Sans',sans-serif;color:#a9a9a9;letter-spacing:-0.011px;">HelloWorldController.cs</div>
<svg style="left:1645.5px;top:262.5px;" width="24.0" height="35.0" viewBox="0 0 24 35"><polyline points="4,1.5 19,17.5 4,33.5" fill="none" stroke="#a9a9a9" stroke-width="3.6" stroke-linejoin="miter"/></svg>
<div class="t" style="left:1692.50px;top:248.99px;font:400 43.00px/60px 'Liberation Sans',sans-serif;color:#c5c5c5;letter-spacing:0.075px;">{&nbsp;}</div>
<div class="t" style="left:1762.30px;top:247.42px;font:400 45.00px/63px 'Liberation Sans',sans-serif;color:#a9a9a9;letter-spacing:0.040px;">helloworld.Controllers</div>
<svg style="left:2213.0px;top:262.5px;" width="24.0" height="35.0" viewBox="0 0 24 35"><polyline points="4,1.5 19,17.5 4,33.5" fill="none" stroke="#a9a9a9" stroke-width="3.6" stroke-linejoin="miter"/></svg>
<svg style="left:2250.0px;top:250.0px;" width="60.0" height="56.0" viewBox="2250 250 60 56"><g fill="none" stroke="#ee9d28" stroke-width="3.8" stroke-linejoin="round"><rect x="-8.85" y="-4.05" width="17.7" height="8.1" rx="1.2" transform="translate(2267.85 265.6) rotate(-45)"/><rect x="-5.6" y="-2.45" width="11.2" height="4.9" rx="0.8" transform="translate(2295.5 276.1) rotate(-45)"/><rect x="-5.6" y="-2.45" width="11.2" height="4.9" rx="0.8" transform="translate(2295.5 293.25) rotate(-45)"/><path d="M2271.4 270.5 V291 Q2271.4 293.2 2273.6 293.2 H2288.8 M2271.4 275.9 H2288.8"/></g></svg>
<div class="t" style="left:2329.90px;top:247.42px;font:400 45.00px/63px 'Liberation Sans',sans-serif;color:#a9a9a9;">helloworld.Controllers.HelloWorldController</div>
<div class="t" style="left:3325.80px;top:247.42px;font:400 45.00px/63px 'Liberation Sans',sans-serif;color:#a9a9a9;letter-spacing:-0.375px;">Get()</div>
</div></div>
<div style="left:1270.0px;top:316.0px;width:2132.0px;height:16.0px;background:linear-gradient(rgba(0,0,0,.6),rgba(0,0,0,.25) 40%,rgba(0,0,0,0));"></div>
<div class="clip" style="left:3240.0px;top:316.0px;width:161.6px;height:783.0px;"><div style="left:-3240.0px;top:-316.0px;width:3564px;height:2278px;">
<div style="left:3244.0px;top:466.0px;width:160.0px;height:6.1px;background:#1e3a5f;"></div>
<div style="left:3280.0px;top:466.0px;width:45.8px;height:6.1px;background:#215087;"></div>
<div class="t" style="left:3244px;top:357.80px;font:700 20.0px/24px 'Liberation Mono',monospace;letter-spacing:0.078px;transform:scale(.25);transform-origin:0 0;opacity:.78;"><span style="color:#569cd6">namespace</span>&nbsp;<span style="color:#4ec9b0">helloworld.Controllers</span></div>
<div class="t" style="left:3244px;top:363.81px;font:700 20.0px/24px 'Liberation Mono',monospace;letter-spacing:0.078px;transform:scale(.25);transform-origin:0 0;opacity:.78;"><span style="color:#d4d4d4">{</span></div>
<div class="t" style="left:3244px;top:369.81px;font:700 20.0px/24px 'Liberation Mono',monospace;letter-spacing:0.078px;transform:scale(.25);transform-origin:0 0;opacity:.78;">&nbsp;&nbsp;&nbsp;&nbsp;<span style="color:#d4d4d4">[</span><span style="color:#4ec9b0">ApiController</span><span style="color:#d4d4d4">]</span></div>
<div class="t" style="left:3244px;top:375.81px;font:700 20.0px/24px 'Liberation Mono',monospace;letter-spacing:0.078px;transform:scale(.25);transform-origin:0 0;opacity:.78;">&nbsp;&nbsp;&nbsp;&nbsp;<span style="color:#d4d4d4">[</span><span style="color:#4ec9b0">Route</span><span style="color:#d4d4d4">(</span><span style="color:#ce9178">""</span><span style="color:#d4d4d4">)]</span></div>
<div class="t" style="left:3244px;top:381.82px;font:700 20.0px/24px 'Liberation Mono',monospace;letter-spacing:0.078px;transform:scale(.25);transform-origin:0 0;opacity:.78;">&nbsp;&nbsp;&nbsp;&nbsp;<span style="color:#d4d4d4">[</span><span style="color:#4ec9b0">Route</span><span style="color:#d4d4d4">(</span><span style="color:#ce9178">"[controller]"</span><span style="color:#d4d4d4">)]</span></div>
<div class="t" style="left:3244px;top:387.82px;font:700 20.0px/24px 'Liberation Mono',monospace;letter-spacing:0.078px;transform:scale(.25);transform-origin:0 0;opacity:.78;">&nbsp;&nbsp;&nbsp;&nbsp;<span style="color:#569cd6">public</span>&nbsp;<span style="color:#569cd6">class</span>&nbsp;<span style="color:#4ec9b0">HelloWorldController</span><span style="color:#d4d4d4">&nbsp;:&nbsp;</span><span style="color:#4ec9b0">ControllerBase</span></div>
<div class="t" style="left:3244px;top:393.83px;font:700 20.0px/24px 'Liberation Mono',monospace;letter-spacing:0.078px;transform:scale(.25);transform-origin:0 0;opacity:.78;">&nbsp;&nbsp;&nbsp;&nbsp;<span style="color:#d4d4d4">{</span></div>
<div class="t" style="left:3244px;top:399.84px;font:700 20.0px/24px 'Liberation Mono',monospace;letter-spacing:0.078px;transform:scale(.25);transform-origin:0 0;opacity:.78;">&nbsp;&nbsp;&nbsp;&nbsp;&nbsp;&nbsp;&nbsp;&nbsp;<span style="color:#569cd6">private</span>&nbsp;<span style="color:#569cd6">readonly</span>&nbsp;<span style="color:#4ec9b0">ILogger</span><span style="color:#d4d4d4">&lt;</span><span style="color:#4ec9b0">HelloWorldController</span><span style="color:#d4d4d4">&gt;&nbsp;</span><span style="color:#9cdcfe">_logger</span><span style="color:#d4d4d4">;</span></div>
<div class="t" style="left:3244px;top:411.85px;font:700 20.0px/24px 'Liberation Mono',monospace;letter-spacing:0.078px;transform:scale(.25);transform-origin:0 0;opacity:.78;">&nbsp;&nbsp;&nbsp;&nbsp;&nbsp;&nbsp;&nbsp;&nbsp;<span style="color:#569cd6">public</span>&nbsp;<span style="color:#dcdcaa">HelloWorldController</span><span style="color:#d4d4d4">(</span><span style="color:#4ec9b0">ILogger</span><span style="color:#d4d4d4">&lt;</span><span style="color:#4ec9b0">HelloWorldController</span><span style="color:#d4d4d4">&gt;&nbsp;</span><span style="color:#9cdcfe">logger</span><span style="color:#d4d4d4">)</span></div>
<div class="t" style="left:3244px;top:417.85px;font:700 20.0px/24px 'Liberation Mono',monospace;letter-spacing:0.078px;transform:scale(.25);transform-origin:0 0;opacity:.78;">&nbsp;&nbsp;&nbsp;&nbsp;&nbsp;&nbsp;&nbsp;&nbsp;<span style="color:#d4d4d4">{</span></div>
<div class="t" style="left:3244px;top:423.86px;font:700 20.0px/24px 'Liberation Mono',monospace;letter-spacing:0.078px;transform:scale(.25);transform-origin:0 0;opacity:.78;">&nbsp;&nbsp;&nbsp;&nbsp;&nbsp;&nbsp;&nbsp;&nbsp;&nbsp;&nbsp;&nbsp;&nbsp;<span style="color:#9cdcfe">_logger</span><span style="color:#d4d4d4">&nbsp;=&nbsp;</span><span style="color:#9cdcfe">logger</span><span style="color:#d4d4d4">;</span></div>
<div class="t" style="left:3244px;top:429.86px;font:700 20.0px/24px 'Liberation Mono',monospace;letter-spacing:0.078px;transform:scale(.25);transform-origin:0 0;opacity:.78;">&nbsp;&nbsp;&nbsp;&nbsp;&nbsp;&nbsp;&nbsp;&nbsp;<span style="color:#d4d4d4">}</span></div>
<div class="t" style="left:3244px;top:441.87px;font:700 20.0px/24px 'Liberation Mono',monospace;letter-spacing:0.078px;transform:scale(.25);transform-origin:0 0;opacity:.78;">&nbsp;&nbsp;&nbsp;&nbsp;&nbsp;&nbsp;&nbsp;&nbsp;<span style="color:#d4d4d4">[</span><span style="color:#4ec9b0">HttpGet</span><span style="color:#d4d4d4">]</span></div>
<div class="t" style="left:3244px;top:447.88px;font:700 20.0px/24px 'Liberation Mono',monospace;letter-spacing:0.078px;transform:scale(.25);transform-origin:0 0;opacity:.78;">&nbsp;&nbsp;&nbsp;&nbsp;&nbsp;&nbsp;&nbsp;&nbsp;<span style="color:#569cd6">public</span>&nbsp;<span style="color:#569cd6">string</span>&nbsp;<span style="color:#dcdcaa">Get</span><span style="color:#d4d4d4">()</span></div>
<div class="t" style="left:3244px;top:453.88px;font:700 20.0px/24px 'Liberation Mono',monospace;letter-spacing:0.078px;transform:scale(.25);transform-origin:0 0;opacity:.78;">&nbsp;&nbsp;&nbsp;&nbsp;&nbsp;&nbsp;&nbsp;&nbsp;<span style="color:#d4d4d4">{</span></div>
<div class="t" style="left:3244px;top:459.88px;font:700 20.0px/24px 'Liberation Mono',monospace;letter-spacing:0.078px;transform:scale(.25);transform-origin:0 0;opacity:.78;">&nbsp;&nbsp;&nbsp;&nbsp;&nbsp;&nbsp;&nbsp;&nbsp;&nbsp;&nbsp;&nbsp;&nbsp;<span style="color:#569cd6">var</span>&nbsp;<span style="color:#9cdcfe">message</span><span style="color:#d4d4d4">&nbsp;=&nbsp;</span><span style="color:#ce9178">"Hello&nbsp;world!"</span><span style="color:#d4d4d4">;</span></div>
<div class="t" style="left:3244px;top:471.89px;font:700 20.0px/24px 'Liberation Mono',monospace;letter-spacing:0.078px;transform:scale(.25);transform-origin:0 0;opacity:.78;">&nbsp;&nbsp;&nbsp;&nbsp;&nbsp;&nbsp;&nbsp;&nbsp;<span style="color:#d4d4d4">}</span></div>
<div class="t" style="left:3244px;top:477.90px;font:700 20.0px/24px 'Liberation Mono',monospace;letter-spacing:0.078px;transform:scale(.25);transform-origin:0 0;opacity:.78;">&nbsp;&nbsp;&nbsp;&nbsp;<span style="color:#d4d4d4">}</span></div>
<div class="t" style="left:3244px;top:483.91px;font:700 20.0px/24px 'Liberation Mono',monospace;letter-spacing:0.078px;transform:scale(.25);transform-origin:0 0;opacity:.78;"><span style="color:#d4d4d4">}</span></div>
</div></div>
<div style="left:2622.2px;top:240.2px;width:744.0px;height:111.3px;background:#333333;box-shadow:0 15px 26px 0px rgba(0,0,0,.95);"></div>
<div style="left:2663.7px;top:278.9px;width:7.7px;height:7.7px;background:#767676;"></div>
<div style="left:2663.7px;top:293.0px;width:7.7px;height:7.7px;background:#767676;"></div>
<div style="left:2663.7px;top:306.9px;width:7.7px;height:7.7px;background:#767676;"></div>
<div style="left:2677.8px;top:278.9px;width:7.7px;height:7.7px;background:#767676;"></div>
<div style="left:2677.8px;top:293.0px;width:7.7px;height:7.7px;background:#767676;"></div>
<div style="left:2677.8px;top:306.9px;width:7.7px;height:7.7px;background:#767676;"></div>
<svg style="left:2730.0px;top:265.0px;" width="660.0" height="64.0" viewBox="2730 265 660 64"><g fill="none" stroke="#75beff" stroke-width="5.4"><path d="M2740.8 275.7 V316.3"/><path d="M2752.6 280.4 L2777 296.2 L2752.6 311.8 Z" stroke-linejoin="miter"/><path d="M2849 296.5 A19.3 19.3 0 0 1 2883.5 286"/><path d="M2887.2 274.8 V290.6 H2871"/><path d="M2978.4 271.6 V299"/><path d="M2964.6 286.2 L2978.4 300 L2992.2 286.2"/><path d="M3088.7 275.2 V302.5"/><path d="M3074.9 288.4 L3088.7 274.6 L3102.5 288.4"/></g><circle cx="2868" cy="310" r="7.2" fill="#75beff"/><circle cx="2978.4" cy="313.8" r="7.2" fill="#75beff"/><circle cx="3088.7" cy="313.8" r="7.2" fill="#75beff"/><g fill="none" stroke="#89d185" stroke-width="5.4"><path d="M3183.5 288.5 A18.1 18.1 0 1 1 3184.5 304.5"/><path d="M3181.7 277 V291.5 H3196"/></g><g fill="none" stroke="#f48771" stroke-width="3.6" stroke-linejoin="miter" transform="translate(3309.6 295) rotate(-45)"><path d="M-32 0 H-22.3"/><path d="M23 0 H31.5"/><path d="M-7.7 -9.3 V9.3 H-13 A9.3 9.3 0 0 1 -13 -9.3 Z"/><path d="M7 -9.5 V9.5 H13.5 A9.5 9.5 0 0 0 13.5 -9.5 Z"/><path d="M-7.7 -6 H0.8 M-7.7 6 H0.8"/></g></svg>
<div style="left:1270.0px;top:1098.2px;width:2181.0px;height:3.2px;background:#414141;"></div>
<div class="t" style="left:1340.40px;top:1138.21px;font:400 35.60px/50px 'Liberation Sans',sans-serif;color:#969696;letter-spacing:-1.407px;">PROBLEMS</div>
<div class="t" style="left:1598.90px;top:1137.72px;font:400 36.28px/51px 'Liberation Sans',sans-serif;color:#969696;letter-spacing:-0.960px;">OUTPUT</div>
<div class="t" style="left:1814.20px;top:1138.21px;font:400 35.84px/50px 'Liberation Sans',sans-serif;color:#e7e7e7;letter-spacing:-1.150px;">DEBUG&nbsp;CONSOLE</div>
<div class="t" style="left:2182.50px;top:1138.21px;font:400 35.85px/50px 'Liberation Sans',sans-serif;color:#969696;letter-spacing:-1.136px;">TERMINAL</div>
<div style="left:1812.2px;top:1207.9px;width:301.0px;height:4.4px;background:#e7e7e7;"></div>
<svg style="left:3105.0px;top:1135.0px;" width="290.0" height="56.0" viewBox="3105 1135 290 56"><g fill="none" stroke="#c5c5c5" stroke-width="3.6"><path d="M3115 1146.9 H3164.2 M3115 1157.2 H3164.2 M3115 1167.6 H3143 M3115 1177.9 H3143"/><path d="M3148.2 1165.8 L3161.4 1179.6 M3161.4 1165.8 L3148.2 1179.6" stroke-width="3.4"/><path d="M3232 1171.5 L3250.3 1153 L3268.6 1171.5"/><path d="M3346.3 1148 L3374.6 1176.3 M3374.6 1148 L3346.3 1176.3"/></g></svg>
<div class="clip" style="left:1270.0px;top:1220.0px;width:2181.0px;height:767.5px;"><div style="left:-1270.0px;top:-1220.0px;width:3564px;height:2278px;">
<div class="t" style="left:1371.5px;top:1206.04px;font:400 45.0px/58px 'Liberation Mono',monospace;letter-spacing:-2.105px;color:#d19e37;-webkit-text-stroke:0.7px;">Loaded&nbsp;'/usr/share/dotnet/shared/Microsoft.NETCore.App/3.1.2/System.Drawing.Primi</div>
<div class="t" style="left:1371.5px;top:1263.93px;font:400 45.0px/58px 'Liberation Mono',monospace;letter-spacing:-2.105px;color:#d19e37;-webkit-text-stroke:0.7px;">tives.dll'.&nbsp;Skipped&nbsp;loading&nbsp;symbols.&nbsp;Module&nbsp;is&nbsp;optimized&nbsp;and&nbsp;the&nbsp;debugger&nbsp;option</div>
<div class="t" style="left:1371.5px;top:1321.74px;font:400 45.0px/58px 'Liberation Mono',monospace;letter-spacing:-2.105px;color:#d19e37;-webkit-text-stroke:0.7px;">&nbsp;'Just&nbsp;My&nbsp;Code'&nbsp;is&nbsp;enabled.</div>
<div class="t" style="left:1371.5px;top:1380.13px;font:400 45.0px/58px 'Liberation Mono',monospace;letter-spacing:-2.105px;color:#d19e37;-webkit-text-stroke:0.7px;">Loaded&nbsp;'/usr/share/dotnet/shared/Microsoft.NETCore.App/3.1.2/System.Security.Prin</div>
<div class="t" style="left:1371.5px;top:1437.84px;font:400 45.0px/58px 'Liberation Mono',monospace;letter-spacing:-2.105px;color:#d19e37;-webkit-text-stroke:0.7px;">cipal.dll'.&nbsp;Skipped&nbsp;loading&nbsp;symbols.&nbsp;Module&nbsp;is&nbsp;optimized&nbsp;and&nbsp;the&nbsp;debugger&nbsp;option</div>
<div class="t" style="left:1371.5px;top:1495.84px;font:400 45.0px/58px 'Liberation Mono',monospace;letter-spacing:-2.105px;color:#d19e37;-webkit-text-stroke:0.7px;">&nbsp;'Just&nbsp;My&nbsp;Code'&nbsp;is&nbsp;enabled.</div>
<div class="t" style="left:1371.5px;top:1551.74px;font:400 45.0px/58px 'Liberation Mono',monospace;letter-spacing:-2.105px;color:#d19e37;-webkit-text-stroke:0.7px;">Loaded&nbsp;'/usr/share/dotnet/shared/Microsoft.NETCore.App/3.1.2/System.ComponentMode</div>
<div class="t" style="left:1371.5px;top:1610.04px;font:400 45.0px/58px 'Liberation Mono',monospace;letter-spacing:-2.105px;color:#d19e37;-webkit-text-stroke:0.7px;">l.Annotations.dll'.&nbsp;Skipped&nbsp;loading&nbsp;symbols.&nbsp;Module&nbsp;is&nbsp;optimized&nbsp;and&nbsp;the&nbsp;debugger</div>
<div class="t" style="left:1371.5px;top:1667.74px;font:400 45.0px/58px 'Liberation Mono',monospace;letter-spacing:-2.105px;color:#d19e37;-webkit-text-stroke:0.7px;">option&nbsp;'Just&nbsp;My&nbsp;Code'&nbsp;is&nbsp;enabled.</div>
<div class="t" style="left:1371.5px;top:1725.43px;font:400 45.0px/58px 'Liberation Mono',monospace;letter-spacing:-2.105px;color:#d19e37;-webkit-text-stroke:0.7px;">Loaded&nbsp;'/usr/share/dotnet/shared/Microsoft.AspNetCore.App/3.1.2/Microsoft.AspNetC</div>
<div class="t" style="left:1371.5px;top:1783.34px;font:400 45.0px/58px 'Liberation Mono',monospace;letter-spacing:-2.105px;color:#d19e37;-webkit-text-stroke:0.7px;">ore.Metadata.dll'.&nbsp;Skipped&nbsp;loading&nbsp;symbols.&nbsp;Module&nbsp;is&nbsp;optimized&nbsp;and&nbsp;the&nbsp;debugger</div>
<div class="t" style="left:1371.5px;top:1841.34px;font:400 45.0px/58px 'Liberation Mono',monospace;letter-spacing:-2.105px;color:#d19e37;-webkit-text-stroke:0.7px;">&nbsp;option&nbsp;'Just&nbsp;My&nbsp;Code'&nbsp;is&nbsp;enabled.</div>
<div class="t" style="left:1371.5px;top:1897.74px;font:400 45.0px/58px 'Liberation Mono',monospace;letter-spacing:-2.105px;color:#d19e37;-webkit-text-stroke:0.7px;">Loaded&nbsp;'/usr/share/dotnet/shared/Microsoft.AspNetCore.App/3.1.2/Microsoft.AspNetC</div>
<div class="t" style="left:1371.5px;top:1955.43px;font:400 45.0px/58px 'Liberation Mono',monospace;letter-spacing:-2.105px;color:#d19e37;-webkit-text-stroke:0.7px;">ore.Diagnostics.Abstractions.dll'.&nbsp;Skipped&nbsp;loading&nbsp;symbols.&nbsp;Module&nbsp;is&nbsp;optimized&nbsp;a</div>
</div></div>
<div style="left:1270.0px;top:1220.0px;width:2181.0px;height:9.0px;background:linear-gradient(rgba(0,0,0,.5),rgba(0,0,0,0));"></div>
<div style="left:1270.0px;top:1987.3px;width:2181.0px;height:2.6px;background:#3a3a3a;"></div>
<svg style="left:1294.0px;top:2003.0px;" width="30.0" height="40.0" viewBox="0 0 30 40"><path d="M4 4 L12 4 L25 20 L12 36 L4 36 L17 20 Z" fill="#c8c8c8"/></svg>
<div style="left:112.0px;top:2052.0px;width:118.0px;height:77.0px;background:#16825d;"></div>
<div style="left:230.0px;top:2052.0px;width:3221.0px;height:77.0px;background:#cc6633;"></div>
<div class="clip" style="left:112.0px;top:2052.0px;width:3338.5px;height:77.0px;"><div style="left:-112.0px;top:-2052.0px;width:3564px;height:2278px;">
<svg style="left:150.0px;top:2062.0px;" width="44.0" height="54.0" viewBox="150 2062 44 54"><g fill="none" stroke="#ffffff" stroke-width="3.6"><path d="M157 2084.5 L171 2097 L157 2109.5"/><path d="M185 2069.5 L174.5 2080 L185 2090.5"/></g></svg>
<svg style="left:258.0px;top:2060.0px;" width="48.0" height="60.0" viewBox="258 2060 48 60"><g fill="none" stroke="#ffffff" stroke-width="3.4"><circle cx="270.5" cy="2073.7" r="5.6"/><circle cx="270.5" cy="2105.8" r="5.6"/><circle cx="292" cy="2080.7" r="5.6"/><path d="M270.5 2079.3 V2100.2"/><path d="M292 2086.3 Q292 2093.5 283 2094 Q271.5 2094.5 270.7 2100"/></g></svg>
<div class="t" style="left:315.30px;top:2062.08px;font:400 41.50px/58px 'Liberation Sans',sans-serif;color:#ffffff;letter-spacing:0.603px;">remote-development+</div>
<svg style="left:784.0px;top:2064.0px;" width="58.0" height="52.0" viewBox="784 2064 58 52"><g fill="none" stroke="#ffffff" stroke-width="3.4"><path d="M798.9 2081.2 A16.3 16.3 0 0 1 829.1 2091"/><path d="M822.9 2086.7 L829.4 2093.3 L836 2086.7"/><path d="M826.9 2098 A16.3 16.3 0 0 1 796.5 2088.8"/><path d="M789.5 2093 L796.2 2086.6 L802.6 2093"/></g></svg>
<svg style="left:890.0px;top:2064.0px;" width="52.0" height="52.0" viewBox="890 2064 52 52"><g fill="none" stroke="#ffffff" stroke-width="3.4"><circle cx="916.2" cy="2089.6" r="19.2"/><path d="M907.6 2081.2 L924.4 2098 M924.4 2081.2 L907.6 2098"/></g></svg>
<div class="t" style="left:952.10px;top:2062.08px;font:400 41.50px/58px 'Liberation Sans',sans-serif;color:#ffffff;">0</div>
<svg style="left:985.0px;top:2062.0px;" width="54.0" height="54.0" viewBox="985 2062 54 54"><g fill="none" stroke="#ffffff" stroke-width="3.4" stroke-linejoin="round"><path d="M1011.2 2071 L1030 2106.5 H992.4 Z"/></g><path d="M1009.4 2084 H1013 V2096 H1009.4 Z M1009.4 2099 H1013 V2102.8 H1009.4 Z" fill="#ffffff"/></svg>
<div class="t" style="left:1046.80px;top:2062.08px;font:400 41.50px/58px 'Liberation Sans',sans-serif;color:#ffffff;">0</div>
<svg style="left:1132.0px;top:2066.0px;" width="40.0" height="50.0" viewBox="1132 2066 40 50"><path d="M1140 2075 L1163 2090.6 L1140 2106.2 Z" fill="none" stroke="#ffffff" stroke-width="3.4" stroke-linejoin="miter"/></svg>
<div class="t" style="left:1187.90px;top:2062.08px;font:400 41.50px/58px 'Liberation Sans',sans-serif;color:#ffffff;letter-spacing:0.361px;">.NET&nbsp;Core&nbsp;SSH&nbsp;Attach&nbsp;(aspnetcore-getting-started)</div>
<svg style="left:2208.0px;top:2064.0px;" width="44.0" height="52.0" viewBox="2208 2064 44 52"><g fill="none" stroke="#ffffff" stroke-width="3.3" stroke-linejoin="round"><path d="M2229.5 2069 C2232 2078 2243.5 2084 2243.5 2097 C2243.5 2105 2238 2110 2230 2110 C2221 2110 2215 2104.5 2215 2096.5 C2215 2090.5 2218.5 2086.5 2221 2083.5 C2221.5 2087.5 2223 2089.5 2225.5 2090.5 C2223 2081.5 2225.5 2073.5 2229.5 2069 Z"/><path d="M2230 2110 C2224.5 2108.5 2223.5 2102.5 2227 2098.5 C2229 2096 2230 2094 2229.5 2091.5 C2234 2095 2237.5 2100 2235.5 2105 C2234.5 2108 2232.5 2109.5 2230 2110"/></g></svg>
<svg style="left:2308.0px;top:2068.0px;" width="52.0" height="46.0" viewBox="2308 2068 52 46"><g fill="none" stroke="#ffffff" stroke-width="3.3" stroke-linejoin="round"><path d="M2314 2074.5 H2330.5 L2335 2080.5 H2353.6 V2107.2 H2314 Z"/><path d="M2314 2086 H2330 L2335 2080.5"/></g></svg>
<div class="t" style="left:2368.30px;top:2061.59px;font:400 42.47px/59px 'Liberation Sans',sans-serif;color:#ffffff;letter-spacing:0.448px;">aspnetcore-getting-started</div>
<svg style="left:2932.0px;top:2066.0px;" width="50.0" height="46.0" viewBox="2932 2066 50 46"><path d="M2939 2095.5 L2950.5 2107 L2974 2076" fill="none" stroke="#ffffff" stroke-width="3.3"/></svg>
<div class="t" style="left:2992.30px;top:2062.08px;font:400 41.50px/58px 'Liberation Sans',sans-serif;color:#ffffff;letter-spacing:-0.171px;">csharp&nbsp;|</div>
<svg style="left:3152.0px;top:2066.0px;" width="50.0" height="46.0" viewBox="3152 2066 50 46"><path d="M3159.2 2095.5 L3170.7 2107 L3194.2 2076" fill="none" stroke="#ffffff" stroke-width="3.3"/></svg>
<div class="t" style="left:3212.60px;top:2062.08px;font:400 41.50px/58px 'Liberation Sans',sans-serif;color:#ffffff;">HelloWorldController.cs</div>
</div></div>
</div></div>
</body></html>
